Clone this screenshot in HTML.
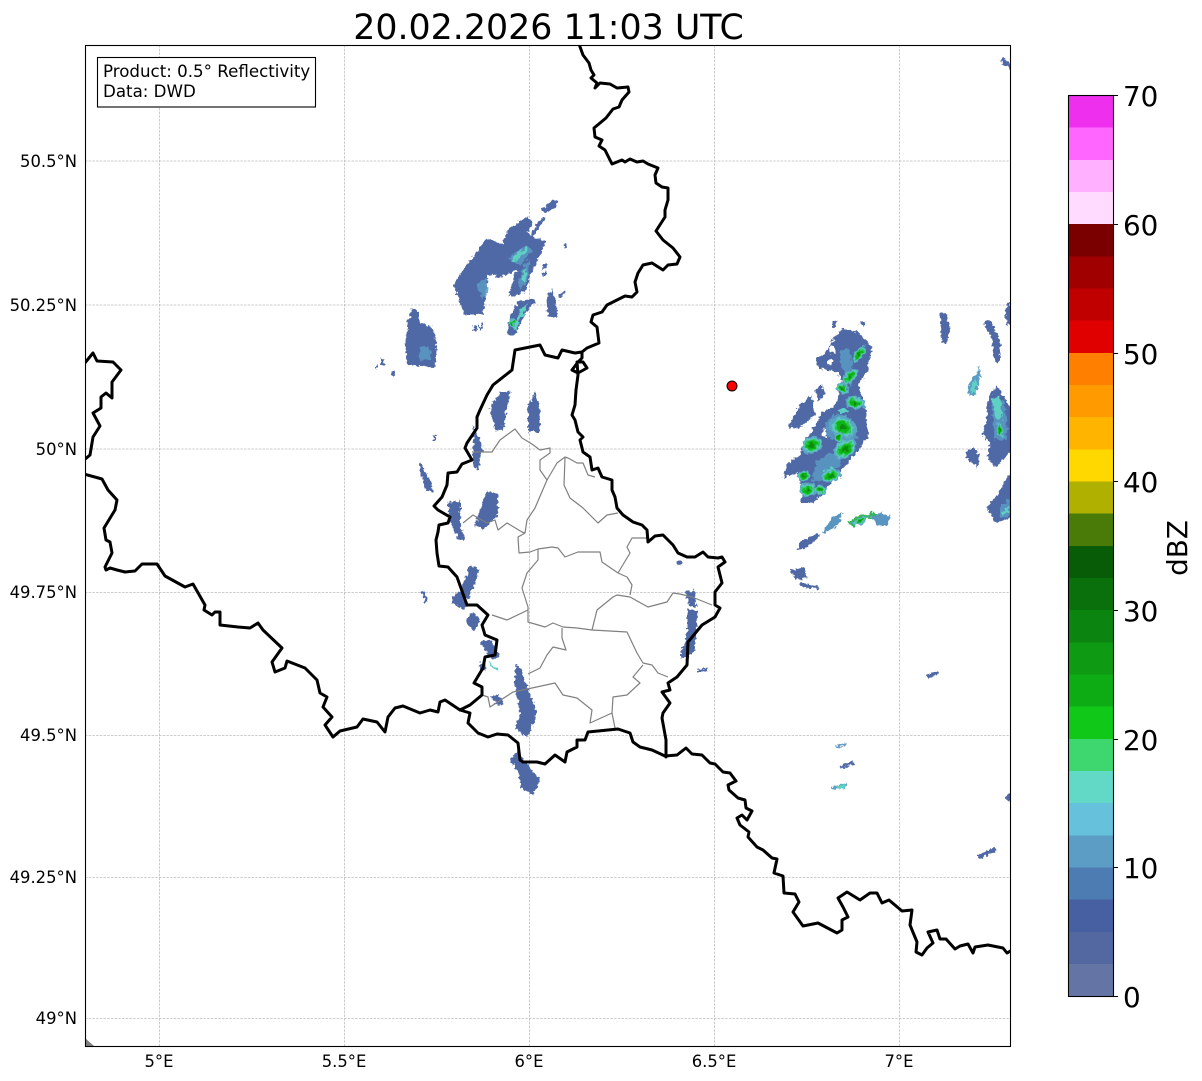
<!DOCTYPE html>
<html><head><meta charset="utf-8"><title>Radar</title>
<style>
html,body{margin:0;padding:0;background:#fff}
svg{display:block;font-family:"DejaVu Sans",sans-serif}
</style></head><body>
<svg xmlns="http://www.w3.org/2000/svg" width="1202" height="1081" viewBox="0 0 1202 1081">
<defs>
<clipPath id="ax"><rect x="85" y="45" width="925" height="1001"/></clipPath>
<filter id="jag" x="0" y="0" width="1202" height="1081" filterUnits="userSpaceOnUse">
<feTurbulence type="fractalNoise" baseFrequency="0.3" numOctaves="2" seed="4"/>
<feDisplacementMap in="SourceGraphic" scale="6" xChannelSelector="R" yChannelSelector="G"/>
</filter>
<filter id="jag2" x="0" y="0" width="1202" height="1081" filterUnits="userSpaceOnUse">
<feTurbulence type="fractalNoise" baseFrequency="0.22" numOctaves="2" seed="9"/>
<feDisplacementMap in="SourceGraphic" scale="7" xChannelSelector="G" yChannelSelector="R"/>
</filter>
<g id="c">
<ellipse rx="1.7" ry="1.75" fill="#5aa6c4"/>
<ellipse rx="1.4" ry="1.45" fill="#5cc8c0"/>
<ellipse rx="1.1" ry="1.1" fill="#2cc850"/>
<ellipse rx=".85" ry=".85" fill="#10b414"/>
<ellipse rx=".4" ry=".4" fill="#0a8c10"/>
</g>
</defs>
<rect width="1202" height="1081" fill="#fff"/>

<!-- grid -->
<g stroke="#bdbdbd" stroke-width=".8" stroke-dasharray="2.5 1.2" fill="none">
<path d="M85 161H1010M85 305H1010M85 449H1010M85 592.500H1010M85 735.500H1010M85 877.500H1010M85 1018.500H1010"/>
<path d="M159.500 45V1046M344.500 45V1046M529.500 45V1046M714.500 45V1046M899.500 45V1046"/>
</g>

<!-- radar -->
<g clip-path="url(#ax)">
<g filter="url(#jag)" fill="#5068a6">
<!-- main east cell -->
<polygon points="823,355 835,337 842,329 858,332 872,347 868,370 858,385 866,410 868,437 858,450 843,468 825,490 814,503 802,503 801,490 798,473 783,478 787,464 800,455 806,440 817,423 822,412 835,406 842,382 838,372 818,368 816,358"/>
<polygon points="788,427 800,405 812,395 815,415 800,428"/>
<polygon points="815,390 822,383 825,395 818,402"/>
<polygon points="832,322 836,321 836,327 832,327"/>
<polygon points="860,322 864,322 864,326 860,326"/>
<polygon points="829,347 834,345 835,352 830,353" fill="#fff"/>
<polygon points="827,360 832,358 832,364 827,365" fill="#fff"/>
<polygon points="822,430 827,428 826,437 822,436" fill="#fff"/>
<polygon points="822,533 832,517 843,512 838,525 828,532" fill="#5a94c0"/>
<polygon points="797,550 800,542 818,533 820,537 805,548"/>
<polygon points="848,522 858,516 875,512 877,517 862,520 852,527" fill="#34b460"/>
<polygon points="870,517 880,513 890,516 888,526 878,525" fill="#5a94c0"/>
<polygon points="790,570 804,568 807,578 795,580"/>
<polygon points="800,583 818,585 820,589 802,588"/>
<!-- right edge -->
<polygon points="940,312 948,315 950,330 946,345 942,342"/>
<polygon points="984,322 990,320 1000,340 1000,362 995,362 992,340"/>
<polygon points="1005,310 1010,300 1012,325 1007,325"/>
<polygon points="968,395 970,380 978,372 980,365 980,378 975,395" fill="#5a9ec4"/>
<polygon points="988,397 997,385 1012,410 1012,450 995,468 987,457 990,443 982,435 987,420"/>
<polygon points="965,452 972,448 980,455 977,467 968,460"/>
<polygon points="986,508 997,495 1012,470 1012,518 995,522"/>
<polygon points="1000,60 1003,58 1012,65 1010,70"/>
<polygon points="978,855 995,847 997,851 980,859"/>
<polygon points="926,675 937,670 939,674 928,679"/>
<polygon points="835,746 846,743 847,745 836,748" fill="#6a9cc4"/>
<polygon points="840,766 853,761 854,765 841,768"/>
<polygon points="831,787 840,785 846,783 846,788 833,789" fill="#5aa0c4"/>
<polygon points="1005,797 1012,792 1012,800 1007,800"/>
<!-- north group -->
<polygon points="453,285 468,263 487,238 495,242 503,245 507,230 527,217 533,222 527,233 545,242 540,255 527,283 527,290 513,297 508,295 517,270 498,278 492,273 488,277 483,315 465,315 458,297"/>
<polygon points="508,323 517,303 533,298 535,303 525,312 517,333 508,335"/>
<polygon points="542,210 552,200 558,201 556,207 546,213"/>
<polygon points="530,235 542,217 545,218 533,237"/>
<polygon points="547,297 552,288 555,300 558,317 548,317"/>
<polygon points="558,297 564,290 566,292 560,299"/>
<polygon points="412,309 417,310 420,323 432,327 437,343 435,367 407,365 405,345 408,320"/>
<polygon points="381,359 384,359 384,365 381,365"/>
<polygon points="392,371 394,371 394,376 392,376"/>
<polygon points="376,364 377,364 377,370 376,370"/>
<polygon points="480,322 483,322 482,330 480,330"/>
<polygon points="473,325 478,325 478,330 473,330"/>
<polygon points="541,268 546,263 548,265 543,270"/>
<polygon points="541,274 547,270 548,272 543,277"/>
<polygon points="564,244 567,244 567,248 564,248"/>
<!-- Luxembourg area -->
<polygon points="490,408 500,392 510,392 503,430 495,430"/>
<polygon points="528,405 535,392 540,410 540,432 528,432"/>
<polygon points="473,425 480,440 483,448 478,470 473,465 473,440"/>
<polygon points="420,462 430,480 433,492 427,492 420,470"/>
<polygon points="447,503 460,500 460,515 464,540 458,540 452,525"/>
<polygon points="478,515 487,490 498,495 498,515 488,525 483,530 475,525"/>
<polygon points="433,434 436,434 436,441 433,441"/>
<polygon points="421,590 424,592 428,602 425,602"/>
<polygon points="460,592 470,565 480,570 472,590 468,600"/>
<polygon points="452,597 460,590 468,605 463,610 452,603"/>
<polygon points="466,622 472,612 480,620 474,632"/>
<polygon points="480,642 490,640 500,655 492,660"/>
<polygon points="478,665 482,662 487,668 483,671"/>
<polygon points="490,697 497,694 504,702 499,706"/>
<polygon points="515,665 520,667 537,713 528,738 515,728 520,713 515,687"/>
<polygon points="510,760 517,752 540,780 533,795 522,788 518,773"/>
<polygon points="685,592 695,590 696,607 690,607"/>
<polygon points="687,610 698,610 695,650 687,658 680,658 687,633"/>
<polygon points="697,669 707,669 707,671 697,671"/>
<polygon points="677,562 681,560 682,564 678,566"/>
</g>
<!-- mid-blue inner -->
<g filter="url(#jag2)">
<g fill="#5a9cc4" opacity=".85">
<polygon points="840,352 848,347 853,365 846,375 840,362"/>
<polygon points="816,462 830,452 842,460 830,478 812,482"/>
<polygon points="824,425 835,414 848,416 858,438 845,443 828,438"/>
<polygon points="476,284 486,278 490,292 482,298"/>
<polygon points="508,258 525,246 533,250 520,266"/>
<polygon points="520,272 531,258 527,284 519,288"/>
<polygon points="420,345 430,347 431,360 420,361"/>
<polygon points="992,405 1004,400 1008,440 994,440"/>
<polygon points="1000,508 1010,498 1010,516 1000,518"/>
</g>
<g fill="#5ed0c4">
<polygon points="512,258 526,247 528,250 514,262"/>
<polygon points="512,328 522,308 529,303 520,320 515,330"/>
<polygon points="521,280 525,268 527,270 524,282"/>
<polygon points="991,398 1000,396 1003,418 996,420"/>
<polygon points="970,392 974,378 977,378 975,392"/>
<polygon points="1001,512 1008,506 1009,512 1004,515"/>
<polygon points="836,786 845,784 845,788 838,789"/>
<polygon points="488,662 490,661 497,670 495,671"/>
<polygon points="824,470 832,466 834,470 826,474"/>
<polygon points="838,410 846,408 848,412 840,414"/>
</g>
<use href="#c" transform="translate(843,388) scale(3.500)"/>
<use href="#c" transform="translate(850,377) rotate(-50) scale(6.500,3)"/>
<use href="#c" transform="translate(843,427) rotate(20) scale(8,6)"/>
<use href="#c" transform="translate(845,449) rotate(-35) scale(8,5)"/>
<use href="#c" transform="translate(812,445) rotate(-35) scale(6,5)"/>
<use href="#c" transform="translate(855,403) rotate(10) scale(6,3.500)"/>
<use href="#c" transform="translate(839,437) scale(3)"/>
<use href="#c" transform="translate(859,354) rotate(-60) scale(6,2.500)"/>
<use href="#c" transform="translate(831,476) rotate(-10) scale(6,3.500)"/>
<use href="#c" transform="translate(804,476) scale(4,3)"/>
<use href="#c" transform="translate(808,490) rotate(-20) scale(5,4)"/>
<use href="#c" transform="translate(820,490) scale(3.500,2.800)"/>
<use href="#c" transform="translate(860,521) rotate(-25) scale(5,2)"/>
<use href="#c" transform="translate(1000,430) rotate(70) scale(5,1.800)"/>
<use href="#c" transform="translate(512,323) scale(1.800,2.500)"/>
</g>
<polygon points="85,1038 94,1046 85,1046" fill="#7f7f7f"/>
</g>

<!-- cantons -->
<g fill="none" stroke="#808080" stroke-width="1.200" stroke-linejoin="round" clip-path="url(#ax)">
<polyline points="472,452 492,452 500,440 515,429 522,438 532,444 540,450 550,448 550,453 540,460 540,470 547,480 557,463 565,457 568,458 577,463 583,463 588,475 595,477"/>
<polyline points="565,458 564,485 570,498 583,508 598,523 607,515 618,513"/>
<polyline points="547,480 535,508 527,520 525,533 518,537 519,553 530,552 538,549 552,547 558,548 565,557 578,552 593,552 600,552 602,562 618,573 627,577 632,585 630,595"/>
<polyline points="618,573 630,553 627,547 632,538 647,538"/>
<polyline points="463,523 473,515 487,523 495,520 498,530 507,523 522,532 525,533"/>
<polyline points="538,549 538,560 527,573 522,588 528,607 528,622 545,627 553,623 563,627 577,628 592,630 597,610 613,597 617,595 630,597 648,607 667,602 673,593 680,594 692,597 712,605"/>
<polyline points="528,610 507,620 492,615"/>
<polyline points="592,630 627,632 637,653 643,663 652,665 658,673 668,677"/>
<polyline points="562,628 562,638 566,650 553,647 547,655 540,668 528,674"/>
<polyline points="643,665 633,677 640,683 627,695 613,697 612,713 615,728"/>
<polyline points="612,713 590,723 592,710 577,698 563,695 555,683 532,688 513,692 490,707 488,697 482,695"/>
</g>

<!-- borders -->
<g fill="none" stroke="#000" stroke-width="3" stroke-linejoin="round" stroke-linecap="round" clip-path="url(#ax)">
<polyline points="579,44 583,55 589,63 591,70 594,75 591,78 597,83 595,88 600,83 610,84 617,88 628,87 629,92 622,100 619,107 613,109 606,118 594,128 595,137 602,140 599,146 605,150 612,164 622,160 625,162 630,159 637,162 643,161 648,164 658,168 655,175 656,183 662,187 668,188 668,200 665,210 665,217 656,231 663,240 673,248 680,257 677,264 668,265 663,270 652,263 643,265 638,273 635,282 637,292 632,297 625,296 607,305 602,312 593,315 591,322 597,327 599,343 587,348 582,352 582,358 578,362 572,370 578,373 587,368 583,362 577,362 578,375 576,390 575,405 572,415 575,420 578,432 583,437 580,440 583,452 590,457 592,470 598,468 602,477 612,480 612,490 615,497 617,508 623,515 633,522 642,525 647,530 648,542 655,536 663,535 673,545 678,553 687,557 695,557 703,552 708,557 718,558 722,557 725,562 718,567 720,575 722,583 715,592 715,605 720,608 715,617 702,625 688,642 687,665 677,677 668,683 670,690 662,692 670,703 663,713 662,718 666,740 666,757"/>
<polyline points="582,352 575,353 562,350 558,358 545,355 540,345 515,350 512,370 493,385 487,395 480,410 477,417 477,428 467,443 465,448 472,460 462,464 457,472 448,473 447,485 442,497 434,506 438,510 450,517 448,523 439,525 438,532 436,540 437,553 439,566 448,567 457,577 467,605 477,605 488,615 482,625 485,635 497,640 495,655 485,657 483,668 474,683 482,687 482,695 470,705 460,710 445,700 440,702 438,712 430,710 420,713 403,706 395,708 388,717 385,732 377,722 363,719 357,727 340,731 333,737 325,725 332,717 323,707 327,697 320,693 317,680 305,668 287,661 285,668 275,672 272,662 282,648 263,630 258,623 250,628 238,627 220,625 220,612 215,612 212,615 204,610 205,605 193,584 185,587 165,576 157,564 142,564 135,571 125,572 117,570 110,568 106,570 105,567 112,553 110,542 106,540 104,528 115,510 117,500 108,490 102,479 84,474"/>
<polyline points="84,364 93,353 97,361 113,362 121,370 112,382 112,398 106,393 101,397 101,408 93,413 100,426 93,437 90,455 84,460"/>
<polyline points="460,710 470,713 468,723 478,733 488,737 497,734 508,735 518,743 520,760 523,762 537,762 545,764 555,755 565,762 567,752 577,747 577,740 585,740 588,732 618,729 630,733 633,742 640,747 652,750 665,756 677,755 686,748 692,754 702,755 710,763 715,764 723,772 730,773 736,781 728,785 729,790 738,798 745,800 746,808 752,811 747,820 742,815 737,818 740,825 749,832 748,837 757,847 763,850 772,858 777,859 774,873 783,876 784,893 795,894 799,902 793,912 803,926 818,923 837,933 842,930 842,920 848,917 843,907 838,898 847,892 860,900 870,893 877,893 882,903 889,900 902,911 912,910 910,925 917,942 916,952 922,955 927,948 933,943 928,932 937,930 940,939 946,939 955,949 960,946 968,944 973,953 975,947 988,945 1003,948 1007,953 1012,950"/>
</g>

<!-- red dot -->
<circle cx="732" cy="386" r="5" fill="#f00" stroke="#000" stroke-width="1"/>

<!-- axes frame -->
<rect x="85.500" y="45.500" width="925" height="1001" fill="none" stroke="#000" stroke-width="1.100"/>

<!-- info box -->
<rect x="97.500" y="57.500" width="218" height="49.500" fill="#fff" stroke="#000" stroke-width="1.100"/>
<text x="103" y="77" font-size="16.670">Product: 0.5° Reflectivity</text>
<text x="103" y="97" font-size="16.670">Data: DWD</text>

<!-- title -->
<text x="548.500" y="39" font-size="34.800" text-anchor="middle">20.02.2026 11:03 UTC</text>

<!-- y labels -->
<g font-size="16.400" text-anchor="end">
<text x="77" y="167">50.5°N</text>
<text x="77" y="311">50.25°N</text>
<text x="77" y="455">50°N</text>
<text x="77" y="598">49.75°N</text>
<text x="77" y="741">49.5°N</text>
<text x="77" y="883">49.25°N</text>
<text x="77" y="1024">49°N</text>
</g>
<!-- x labels -->
<g font-size="16.400" text-anchor="middle">
<text x="159" y="1067">5°E</text>
<text x="344" y="1067">5.5°E</text>
<text x="529" y="1067">6°E</text>
<text x="714" y="1067">6.5°E</text>
<text x="899" y="1067">7°E</text>
</g>

<!-- colorbar -->
<g shape-rendering="crispEdges">
<rect x="1068" y="95.500" width="45" height="32.200" fill="#ee30ee"/>
<rect x="1068" y="127.700" width="45" height="32.200" fill="#ff66ff"/>
<rect x="1068" y="159.900" width="45" height="32.200" fill="#ffb0ff"/>
<rect x="1068" y="192" width="45" height="32.200" fill="#ffdcff"/>
<rect x="1068" y="224.200" width="45" height="32.200" fill="#7a0000"/>
<rect x="1068" y="256.400" width="45" height="32.200" fill="#a00000"/>
<rect x="1068" y="288.500" width="45" height="32.200" fill="#c00000"/>
<rect x="1068" y="320.700" width="45" height="32.200" fill="#e00000"/>
<rect x="1068" y="352.900" width="45" height="32.200" fill="#ff8000"/>
<rect x="1068" y="385" width="45" height="32.200" fill="#ff9a00"/>
<rect x="1068" y="417.200" width="45" height="32.200" fill="#ffb400"/>
<rect x="1068" y="449.400" width="45" height="32.200" fill="#ffd800"/>
<rect x="1068" y="481.500" width="45" height="32.200" fill="#b0b000"/>
<rect x="1068" y="513.700" width="45" height="32.200" fill="#4a7a08"/>
<rect x="1068" y="545.900" width="45" height="32.200" fill="#085c08"/>
<rect x="1068" y="578" width="45" height="32.200" fill="#0a700c"/>
<rect x="1068" y="610.200" width="45" height="32.200" fill="#0c8410"/>
<rect x="1068" y="642.400" width="45" height="32.200" fill="#0e9a12"/>
<rect x="1068" y="674.500" width="45" height="32.200" fill="#0eac14"/>
<rect x="1068" y="706.700" width="45" height="32.200" fill="#10c818"/>
<rect x="1068" y="738.900" width="45" height="32.200" fill="#3ed66e"/>
<rect x="1068" y="771" width="45" height="32.200" fill="#62d8c6"/>
<rect x="1068" y="803.200" width="45" height="32.200" fill="#66c2dc"/>
<rect x="1068" y="835.400" width="45" height="32.200" fill="#5b9dc5"/>
<rect x="1068" y="867.500" width="45" height="32.200" fill="#4d7cb3"/>
<rect x="1068" y="899.700" width="45" height="32.200" fill="#4660a2"/>
<rect x="1068" y="931.900" width="45" height="32.200" fill="#5368a0"/>
<rect x="1068" y="964" width="45" height="32.500" fill="#6475a5"/>
</g>
<rect x="1068.500" y="95.500" width="45" height="901" fill="none" stroke="#000" stroke-width="1.100"/>
<path d="M1113 95.500h5M1113 224.500h5M1113 353.500h5M1113 481.500h5M1113 610.500h5M1113 739.500h5M1113 867.500h5M1113 996.500h5" stroke="#000" stroke-width="1.100"/>
<g font-size="27.800">
<text x="1123" y="106">70</text>
<text x="1123" y="235">60</text>
<text x="1123" y="364">50</text>
<text x="1123" y="492">40</text>
<text x="1123" y="621">30</text>
<text x="1123" y="750">20</text>
<text x="1123" y="878">10</text>
<text x="1123" y="1007">0</text>
</g>
<text transform="translate(1187,548) rotate(-90)" font-size="27.800" text-anchor="middle">dBZ</text>
</svg>
</body></html>
